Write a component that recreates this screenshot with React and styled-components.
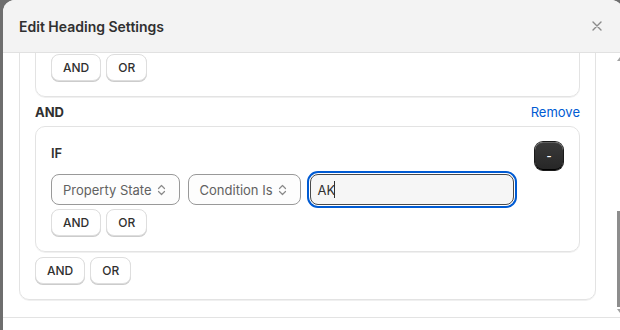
import React, {useLayoutEffect, useRef} from 'react'
import styled, {createGlobalStyle} from 'styled-components'

const GlobalStyle = createGlobalStyle`
  html, body {
    margin: 0;
    padding: 0;
    background: #6e6e6e;
    font-family: Inter, "Noto Sans", "Liberation Sans", sans-serif;
    color: #303030;
    overflow: hidden;
  }
`

export default function App() {
  const bodyRef = useRef(null)

  // the modal body is scrolled down to the last condition group
  useLayoutEffect(() => {
    if (bodyRef.current) bodyRef.current.scrollTop = 114
  }, [])

  return (
    <Page>
      <GlobalStyle />
      <Modal>
        <Header>
          <Title>Edit Heading Settings</Title>
          <CloseButton aria-label="Close">
            <svg width="10" height="10" viewBox="0 0 10 10">
              <path d="M1 1 L9 9 M9 1 L1 9" stroke="#8a8a8a" strokeWidth="1.4" strokeLinecap="round" />
            </svg>
          </CloseButton>
        </Header>

        <BodyWrap>
          <Body ref={bodyRef}>
            <Card>
              <Group>
                <GroupHead>
                  <IfLabel>IF</IfLabel>
                  <MinusButton>-</MinusButton>
                </GroupHead>
                <FieldRow>
                  <Select>Property State <SelectIcon /></Select>
                  <Select>Condition Is <SelectIcon /></Select>
                  <Input>CA</Input>
                </FieldRow>
                <ButtonRow>
                  <Button>AND</Button>
                  <Button>OR</Button>
                </ButtonRow>
              </Group>

              <JoinRow>
                <JoinLabel>AND</JoinLabel>
                <RemoveLink>Remove</RemoveLink>
              </JoinRow>

              <Group>
                <GroupHead>
                  <IfLabel>IF</IfLabel>
                  <MinusButton>-</MinusButton>
                </GroupHead>
                <FieldRow>
                  <Select>Property State <SelectIcon /></Select>
                  <Select>Condition Is <SelectIcon /></Select>
                  <Input $focused>AK<Caret /></Input>
                </FieldRow>
                <ButtonRow>
                  <Button>AND</Button>
                  <Button>OR</Button>
                </ButtonRow>
              </Group>

              <ButtonRow $outer>
                <Button>AND</Button>
                <Button>OR</Button>
              </ButtonRow>
            </Card>
            <Spacer />
          </Body>
          <Scrollbar>
            <ArrowUp />
            <Thumb />
            <ArrowDown />
          </Scrollbar>
        </BodyWrap>

        <Footer />
      </Modal>
    </Page>
  )
}

function SelectIcon() {
  return (
    <svg width="9" height="12" viewBox="0 0 9 12">
      <path d="M1.5 4.5 L4.5 1.5 L7.5 4.5 M1.5 7.5 L4.5 10.5 L7.5 7.5" fill="none" stroke="#8a8a8a" strokeWidth="1.2" strokeLinecap="round" strokeLinejoin="round" />
    </svg>
  )
}

const Page = styled.div`
  height: 330px;
  padding-left: 3px;
`

const Modal = styled.div`
  width: 620px;
  height: 340px;
  background: #fff;
  border-radius: 12px 12px 0 0;
  overflow: hidden;
  display: flex;
  flex-direction: column;
`

const Header = styled.div`
  height: 52px;
  flex: none;
  background: #f3f3f3;
  border-bottom: 1px solid #e1e1e1;
  display: flex;
  align-items: center;
  justify-content: space-between;
  padding: 0 16px 0 16px;
  box-sizing: content-box;
  width: 585px;
`

const Title = styled.h2`
  margin: 0;
  font-size: 14px;
  font-weight: 620;
  color: #303030;
`

const CloseButton = styled.button`
  width: 20px;
  height: 20px;
  border: 0;
  background: none;
  padding: 0;
  display: flex;
  align-items: center;
  justify-content: center;
  margin-right: -3px;
`

const BodyWrap = styled.div`
  position: relative;
  height: 264px;
  flex: none;
  width: 617px;
`

const Body = styled.div`
  height: 100%;
  overflow: hidden;
  padding: 16px 24px 0 16px;
  box-sizing: border-box;
`

const Spacer = styled.div`
  height: 40px;
`

const Scrollbar = styled.div`
  position: absolute;
  top: 0;
  right: -3px;
  bottom: 0;
  width: 8px;
`

const ArrowUp = styled.div`
  position: absolute;
  top: 4px;
  left: 2px;
  width: 0;
  height: 0;
  border-left: 3px solid transparent;
  border-right: 3px solid transparent;
  border-bottom: 4px solid #a3a3a3;
`

const ArrowDown = styled.div`
  position: absolute;
  top: 256px;
  left: 2px;
  width: 0;
  height: 0;
  border-left: 3px solid transparent;
  border-right: 3px solid transparent;
  border-top: 4px solid #a3a3a3;
`

const Thumb = styled.div`
  position: absolute;
  top: 158px;
  left: 2px;
  width: 7px;
  height: 96px;
  background: #8d8d8d;
`

const Footer = styled.div`
  flex: 1;
  border-top: 1px solid #e3e3e3;
  background: #fff;
`

const Card = styled.div`
  border: 1px solid #e3e3e3;
  border-radius: 10px;
  box-shadow: 0 1px 0 rgba(0, 0, 0, 0.06);
  padding: 15px 15px 15px;
`

const Group = styled.div`
  border: 1px solid #e3e3e3;
  border-radius: 10px;
  box-shadow: 0 1px 0 rgba(0, 0, 0, 0.06);
  padding: 15px 16px 15px 15px;
`

const GroupHead = styled.div`
  display: flex;
  justify-content: space-between;
  align-items: flex-start;
  height: 28px;
`

const IfLabel = styled.span`
  font-size: 13px;
  font-weight: 600;
  line-height: 20px;
  margin-top: 1px;
`

const MinusButton = styled.button`
  width: 28px;
  height: 28px;
  border-radius: 8px;
  border: 0;
  background: linear-gradient(#3a3a3a, #262626);
  box-shadow: inset 0 -1px 0 #000, inset 0 1px 0 rgba(255, 255, 255, 0.2), 0 0 0 1px #1a1a1a;
  color: #fff;
  font-family: Inter, sans-serif;
  font-size: 11px;
  font-weight: 600;
  padding: 0;
`

const FieldRow = styled.div`
  display: flex;
  gap: 8px;
  margin-top: 4px;
  padding-right: 49px;
`

const Select = styled.div`
  height: 31px;
  box-sizing: border-box;
  border: 1px solid #999;
  border-radius: 8px;
  background: #fdfdfd;
  display: flex;
  align-items: center;
  gap: 5px;
  padding: 0 13px 0 11px;
  font-size: 13px;
  color: #616161;
  white-space: nowrap;
`

const Input = styled.div`
  flex: 1;
  height: 31px;
  box-sizing: border-box;
  border: 1px solid ${p => (p.$focused ? '#4a4a4a' : '#8a8a8a')};
  border-radius: 8px;
  background: #f6f6f6;
  outline: ${p => (p.$focused ? '2px solid #005bd3' : 'none')};
  outline-offset: 1px;
  margin-left: 1px;
  display: flex;
  align-items: center;
  padding-left: 7px;
  font-size: 13px;
  color: #303030;
`

const Caret = styled.span`
  width: 1px;
  height: 17px;
  background: #303030;
  margin-left: -1px;
`

const ButtonRow = styled.div`
  display: flex;
  gap: 5px;
  margin-top: ${p => (p.$outer ? '5px' : '4px')};
`

const Button = styled.button`
  height: 27px;
  padding: 0 11px;
  border-radius: 8px;
  border: 1px solid #dedede;
  background: #fff;
  box-shadow: 0 1px 0 #cccccc;
  font-family: Inter, sans-serif;
  font-size: 12px;
  font-weight: 500;
  color: #303030;
`

const JoinRow = styled.div`
  display: flex;
  justify-content: space-between;
  align-items: center;
  height: 20px;
  margin: 5px 0 4px;
`

const JoinLabel = styled.span`
  font-size: 13px;
  font-weight: 650;
`

const RemoveLink = styled.a`
  font-size: 13px;
  color: #005bd3;
  cursor: pointer;
`
